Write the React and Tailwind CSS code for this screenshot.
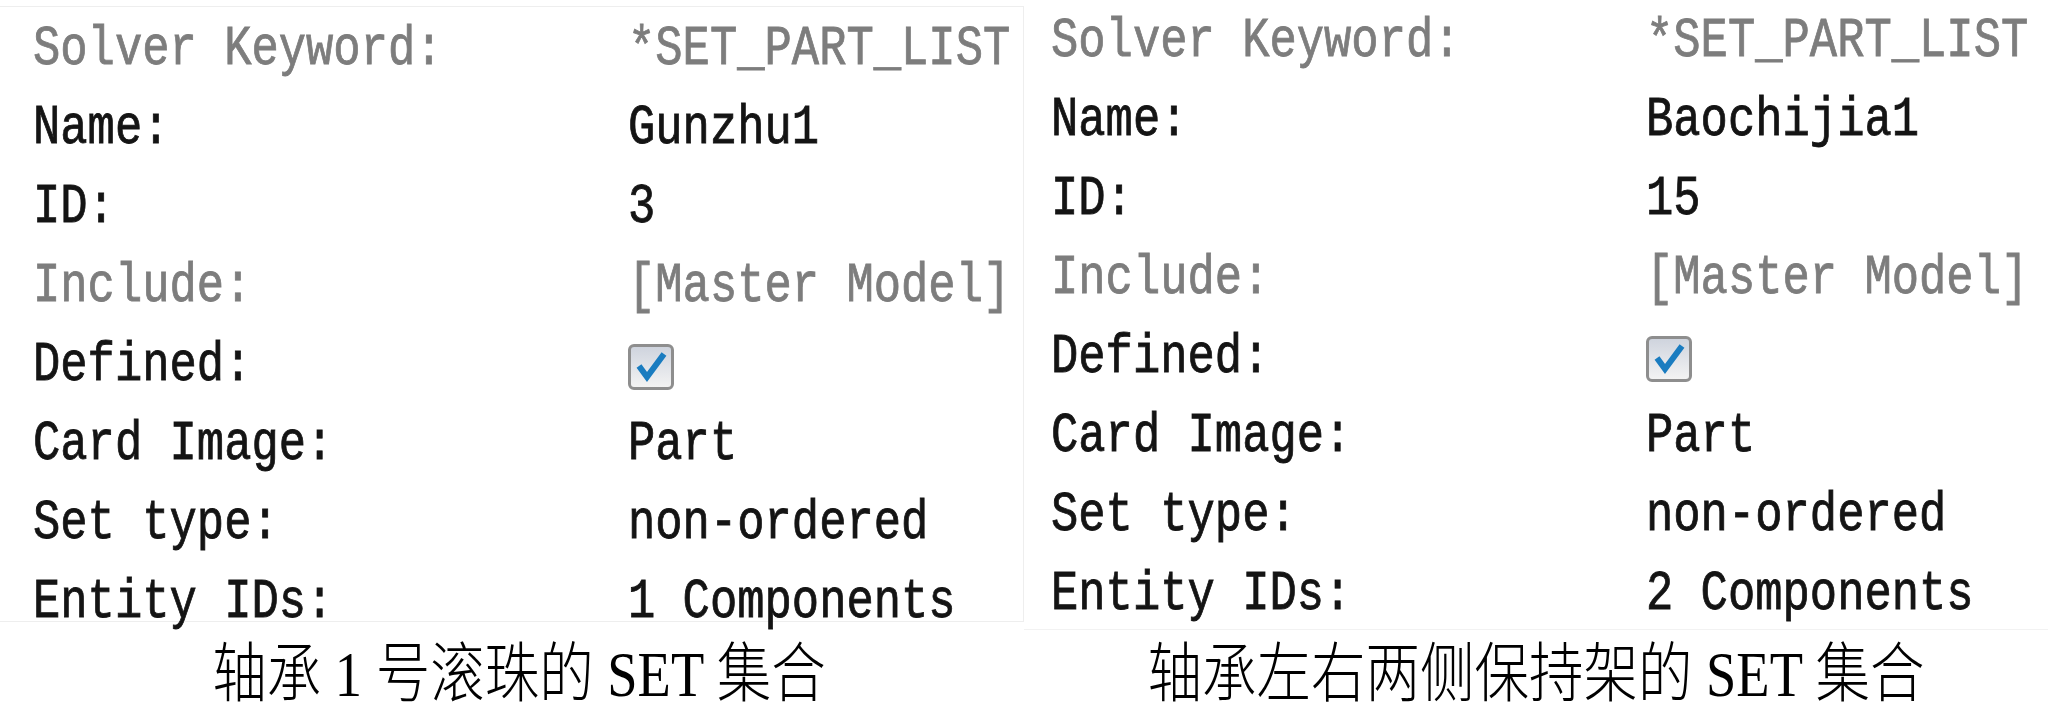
import React from "react";

const mono = { fontFamily: '"Liberation Mono", "DejaVu Sans Mono", monospace' };

function Check() {
  return (
    <div className="w-[46px] h-[46px] rounded-[6px] border-[3px] border-[#8e8e8e] bg-gradient-to-b from-[#cfd4de] to-[#f3f3f3] flex items-center justify-center">
      <svg width="36" height="36" viewBox="0 0 36 36">
        <path d="M6 17 L14 28 L31 5" fill="none" stroke="#1a7cc0" strokeWidth="6" strokeLinejoin="miter" strokeLinecap="butt" />
      </svg>
    </div>
  );
}

function Row({ label, value, gray }) {
  const color = gray ? "text-[#7d7d7d]" : "text-[#141414]";
  return (
    <div className="h-[79px] shrink-0 flex items-center">
      <div className={`w-[595px] shrink-0 text-[45.5px] leading-none [-webkit-text-stroke:0.7px_currentColor] ${color}`} style={mono}>
        <span className="inline-block scale-y-[1.2] whitespace-pre">{label}</span>
      </div>
      <div className={`text-[45.5px] leading-none [-webkit-text-stroke:0.7px_currentColor] ${color}`} style={mono}>
        {value === "CHECK" ? (
          <Check />
        ) : (
          <span className="inline-block scale-y-[1.2] whitespace-pre">{value}</span>
        )}
      </div>
    </div>
  );
}

function Panel({ name, id, count, caption, top, leftPad, capPad, border }) {
  const rows = [
    ["Solver Keyword:", "*SET_PART_LIST", true],
    ["Name:", name, false],
    ["ID:", id, false],
    ["Include:", "[Master Model]", true],
    ["Defined:", "CHECK", false],
    ["Card Image:", "Part", false],
    ["Set type:", "non-ordered", false],
    ["Entity IDs:", count, false],
  ];
  return (
    <div className="w-[1024px] h-[717px] flex flex-col shrink-0">
      <div className={`flex flex-col shrink-0 ${top} ${leftPad} ${border}`}>
        {rows.map(([l, v, g]) => (
          <Row key={l} label={l} value={v} gray={g} />
        ))}
      </div>
      <div
        className={`flex-1 flex items-center justify-center ${capPad} text-[54.5px] leading-none text-black font-light`}
        style={{ fontFamily: '"Liberation Serif", "Noto Sans CJK SC", serif' }}
      >
        <span className="inline-block scale-y-[1.18] whitespace-pre">{caption}</span>
      </div>
    </div>
  );
}

export default function App() {
  return (
    <div className="w-[2048px] h-[717px] bg-white flex overflow-hidden">
      <Panel
        name="Gunzhu1"
        id="3"
        count="1 Components"
        caption="轴承 1 号滚珠的 SET 集合"
        top="mt-[6px] pt-[4px] h-[616px]"
        leftPad="pl-[33px]"
        capPad="pl-[14px] pt-[12px]"
        border="border-t border-b border-r border-[#eeeeee]"
      />
      <Panel
        name="Baochijia1"
        id="15"
        count="2 Components"
        caption="轴承左右两侧保持架的 SET 集合"
        top="pt-[3px] h-[630px]"
        leftPad="pl-[27px]"
        capPad="pt-[4px]"
        border="border-b border-[#f2f2f2]"
      />
    </div>
  );
}
